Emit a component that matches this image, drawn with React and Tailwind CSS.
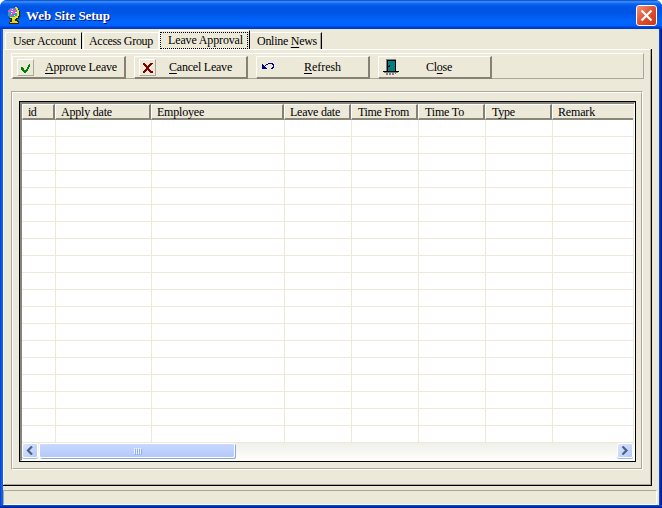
import React from 'react';

const label = "whitespace-pre font-['Liberation_Serif','Noto_Serif',serif] text-[12px] leading-[14px] text-black";

// Stretches or tightens a caption to the width it is given.
function Caption({ children, w, className = '' }) {
  const ref = React.useRef(null);
  const [gap, setGap] = React.useState(0);
  React.useLayoutEffect(() => {
    const el = ref.current;
    setGap((w - el.getBoundingClientRect().width) / Math.max(1, el.textContent.length));
  }, [w]);
  return (
    <span ref={ref} className={`${label} ${className}`} style={{ letterSpacing: gap }}>
      {children}
    </span>
  );
}

const U = ({ children }) => <span className="underline underline-offset-2">{children}</span>;

function Globe() {
  return (
    <svg width="14" height="17" viewBox="0 0 14 17" shapeRendering="crispEdges">
      <path d="M3 1h5v1h2v2h1v4h-1v2H8v1H3v-1H2V9H1V3h1V2h1z" fill="#28a0b0" />
      <path d="M3 2h2v2H3v1H1V3h2zM6 3h3v2H8v2H5V5h1zM3 7h2v2H3zM7 1h2v1H7z" fill="#f048e8" />
      <path d="M4 4h2v1H4zM8 5h2v1H8zM4 6h1v1H4zM7 8h1v1H7zM5 2h1v1H5z" fill="#d8f8ff" />
      <path d="M9 1h2v1h1v2h1v6h-1v2h-2v1H4v-1H2v-1h7v-1h2V3h-1V2H9z" fill="#202808" />
      <path d="M8 0h2v1h1v2h1v6h-1v2H9v1H5v-1H3v-1h5V9h2V3H9V1H8z" fill="#f0e020" />
      <path d="M3 13h8v1h1v3H2v-2h1z" fill="#302808" />
      <path d="M5 12h3v2h2v1h1v1H3v-1h2z" fill="#e8d020" />
    </svg>
  );
}

const Check = () => (
  <svg width="15" height="16" viewBox="0 0 15 16" shapeRendering="crispEdges">
    <path d="M3 7h2v1h1v2h2V9h1V7h1V5h1V4h1v3h-1v2h-1v2H9v1H8v1H6v-1H5v-1H4v-1H3z" fill="#008000" />
  </svg>
);
const Cross = () => (
  <svg width="15" height="16" viewBox="0 0 15 16" shapeRendering="crispEdges">
    <path d="M3 3h2v1h1v1h1v1h1V5h1V4h1V3h3v1h-1v1h-1v1h-1v1H9v2h1v1h1v1h2v2h-3v-1H9v-1H8v-1H7v1H6v1H5v1H3v-2h1v-1h1V9h1V7H5V6H4V5H3z" fill="#800000" />
  </svg>
);
const Undo = () => (
  <svg width="16" height="16" viewBox="0 0 16 16" shapeRendering="crispEdges">
    <path d="M1 5h1v1h1v1h1V6h1V5h2V4h5v1h1v4h-1v1h-2V9h1V8h1V6h-1V5H7v1H5v1H4v1h1v1h1v1H1z" fill="#000080" />
  </svg>
);
const Door = () => (
  <svg width="16" height="16" viewBox="0 0 16 16" shapeRendering="crispEdges">
    <path d="M3 0h10v12H3z" fill="#808080" />
    <path d="M4 1h9v11h3v1H0v-1h4z" fill="#000" />
    <path d="M5 2h7v10H5z" fill="#008080" />
    <path d="M6 7h1v1H6zM5 7h1v1H5zM6 6h1v1H6z" fill="#000" />
    <path d="M1 13h14v1H1zM3 14h2v2H3zM6 14h2v2H6zM9 14h2v2H9zM12 14h1v1h-1z" fill="#808080" />
  </svg>
);

function ToolButton({ icon, framed, pad, w, children }) {
  return (
    <button className="flex h-[23px] w-[114px] shrink-0 border-t border-r-2 border-b-2 border-l border-t-white border-r-[#858275] border-b-[#858275] border-l-white bg-[#ece9d8] pl-[4px] text-left">
      <span className={framed ? 'mt-[2px] flex h-[17px] w-[17px] shrink-0 items-center justify-center border border-t-white border-r-[#aca899] border-b-[#aca899] border-l-white' : 'mt-[2px] h-4 w-[17px] shrink-0'}>
        {icon}
      </span>
      <span className={`flex pt-[3px] ${pad}`}>
        <Caption w={w}>{children}</Caption>
      </span>
    </button>
  );
}

const columns = [
  ['id', 'w-[33px]', 'pl-[5px]', 8],
  ['Apply date', 'w-[96px]', 'pl-[5px]', 51],
  ['Employee', 'w-[133px]', 'pl-[5px]', 47],
  ['Leave date', 'w-[67px]', 'pl-[5px]', 50],
  ['Time From', 'w-[67px]', 'pl-[6px]', 51],
  ['Time To', 'w-[67px]', 'pl-[6px]', 39],
  ['Type', 'w-[67px]', 'pl-[6px]', 23],
  ['Remark', 'w-[81px]', 'pl-[5px]', 37],
];

function Arrow({ right }) {
  return (
    <span className="flex h-[15px] w-[16px] shrink-0 items-center justify-center rounded-[2px] border border-white bg-linear-to-br from-[#dbe5ff] to-[#b4c8f8] shadow-[0_1px_0_#9ab8e8]">
      <svg width="8" height="9" viewBox="0 0 8 9" fill="none" stroke="#4d6185" strokeWidth="2.2">
        <path d={right ? 'M1.5 .5l4 4-4 4' : 'M6 .5l-4 4 4 4'} />
      </svg>
    </span>
  );
}

export default function App() {
  return (
    <div className="flex h-[508px] w-[662px] flex-col overflow-hidden rounded-t-[7px] bg-[linear-gradient(90deg,#0831d9_0,#0855dd_1px,#166aee_2px,#0855dd_3px,#0855dd_659px,#0040d8_660px,#001da0_661px,#00138c_662px)]">
      <header className="flex h-[29px] shrink-0 items-start bg-[linear-gradient(180deg,#0842b5_0,#3c91ff_6%,#0a66f3_13%,#0054e3_24%,#0055e5_45%,#0066ff_75%,#0060f8_88%,#003dd7_95%,#0036c0_100%)] pl-[7px]">
        <span className="mt-[7px] w-[19px] shrink-0"><Globe /></span>
        <span className="mt-[9px] flex grow [text-shadow:1px_1px_#10107a]">
          <Caption w={84} className="text-[13px]! font-bold text-white!">Web Site Setup</Caption>
        </span>
        <button className="mt-[5px] mr-[5px] flex h-[21px] w-[21px] items-center justify-center rounded-[3px] border border-white bg-linear-to-br from-[#f09078] via-[#e05030] to-[#c83810]">
          <svg width="13" height="13" viewBox="0 0 13 13" stroke="white" strokeWidth="2.2"><path d="M1.5 1.5l10 10M11.5 1.5l-10 10" /></svg>
        </button>
      </header>

      <div className="mx-[3px] flex h-[476px] shrink-0 flex-col bg-[#ece9d8]">
        <nav className="flex h-[20px] shrink-0 pl-[2px]">
          <div className="mt-[3px] flex h-[17px] w-[77px] rounded-tl-[2px] border-t border-r border-l border-t-white border-r-black border-l-white pt-[1px] pl-[7px]"><Caption w={63}>User Account</Caption></div>
          <div className="mt-[3px] ml-[1px] flex h-[17px] w-[76px] border-t border-r border-l border-white pt-[1px] pl-[5px]"><Caption w={64}>Access Group</Caption></div>
          <div className="mt-[1px] flex h-[19px] w-[91px] border-t border-r border-l border-t-white border-r-black border-l-white">
            <div className="mt-[1px] flex h-[17px] w-[88px] border border-dotted border-black pl-[7px]"><Caption w={75}>Leave Approval</Caption></div>
          </div>
          <div className="mt-[3px] flex h-[17px] w-[72px] border-t border-r border-t-white border-r-black">
            <div className="flex w-[71px] border-r border-[#aca899] pt-[1px] pl-[7px]"><Caption w={60}>Online <U>N</U>ews</Caption></div>
          </div>
        </nav>

        <main className="h-[437px] w-[649px] shrink-0 border-r border-b border-black">
          <div className="h-[436px] border border-t-white border-r-[#aca899] border-b-[#aca899] border-l-white pt-[3px] pl-[7px]">
            <div className="flex h-[26px] w-[633px] gap-[8px] border border-t-white border-r-[#aca899] border-b-[#aca899] border-l-white pt-[2px]">
              <ToolButton icon={<Check />} framed pad="pl-[11px]" w={72}><U>A</U>pprove Leave</ToolButton>
              <ToolButton icon={<Cross />} framed pad="pl-[13px]" w={63}><U>C</U>ancel Leave</ToolButton>
              <ToolButton icon={<Undo />} pad="pl-[26px]" w={37}><U>R</U>efresh</ToolButton>
              <ToolButton icon={<Door />} pad="pl-[26px]" w={26}>Cl<U>o</U>se</ToolButton>
            </div>

            <section className="mt-[12px] h-[379px] w-[632px] border border-t-[#aca899] border-r-white border-b-white border-l-[#aca899]">
              <div className="h-[377px] border border-t-white border-r-[#aca899] border-b-[#aca899] border-l-white pt-[8px] pl-[6px]">
                <div className="h-[361px] w-[617px] border border-black">
                  <div className="h-[359px] border-t-2 border-r border-b border-l-2 border-t-[#87857a] border-r-white border-b-white border-l-[#87857a] bg-white">
                    <div className="flex h-[16px] w-[612px] overflow-hidden bg-[#ece9d8]">
                      {columns.map(([name, width, pad, w], i) => (
                        <div key={name} className={`flex h-[16px] shrink-0 border-t border-b-2 border-l border-t-white border-b-[#8a877a] border-l-white ${i < 7 ? 'border-r-2 border-r-[#858275]' : ''} ${pad} ${width}`}>
                          <Caption w={w}>{name}</Caption>
                        </div>
                      ))}
                    </div>
                    <div className="flex h-[322px] w-[612px] border-r border-[#ece9d8] bg-[repeating-linear-gradient(180deg,white_0,white_16px,#ece9d8_16px,#ece9d8_17px)]">
                      {columns.map(([name, width], i) => (
                        <div key={name} className={`shrink-0 ${i < 7 ? 'border-r border-[#ece9d8]' : ''} ${i === 0 ? 'w-[34px]' : i === 7 ? 'w-[80px]' : width}`} />
                      ))}
                    </div>
                    <div className="flex h-[18px] w-[612px] items-start border-t border-[#ece9d8] bg-linear-to-b from-[#f0f0ea] to-[#fefefb] pr-[1px]">
                      <Arrow />
                      <div className="ml-[1px] flex h-[15px] w-[196px] items-center justify-center gap-[1px] rounded-[2px] border border-white bg-linear-to-b from-[#c9d8ff] to-[#b5c8f8] shadow-[1px_1px_0_#8aa8dc]">
                        {[0, 1, 2, 3].map((n) => <i key={n} className="h-[6px] w-[1px] bg-[#eef4fe] shadow-[1px_1px_0_#8cb0f8]" />)}
                      </div>
                      <span className="grow" />
                      <Arrow right />
                    </div>
                  </div>
                </div>
              </div>
            </section>
          </div>
        </main>

        <footer className="mt-[4px] h-[15px] w-[654px] border border-t-[#aca899] border-r-white border-b-white border-l-[#aca899]" />
      </div>
      <div className="h-[3px] w-full shrink-0 bg-linear-to-b from-[#0855dd] to-[#00138c]" />
    </div>
  );
}
